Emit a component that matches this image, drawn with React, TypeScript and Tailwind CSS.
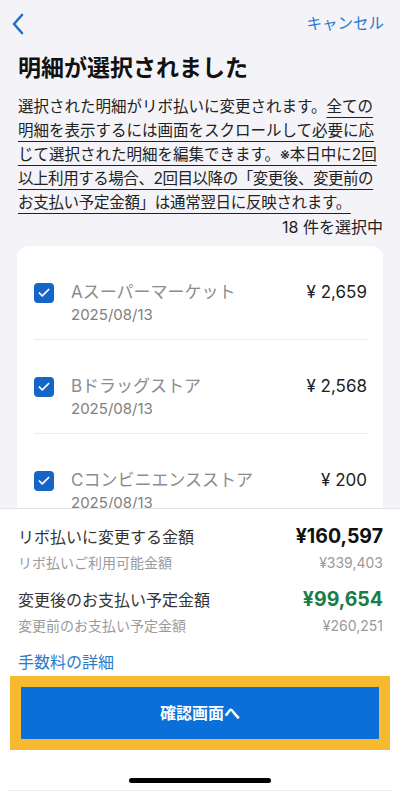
import { Check } from 'lucide-react';

const FONT = { fontFamily: '"Inter", "Noto Sans CJK JP", sans-serif' };

const ITEMS = [
  { name: 'Aスーパーマーケット', date: '2025/08/13', amount: '¥ 2,659' },
  { name: 'Bドラッグストア', date: '2025/08/13', amount: '¥ 2,568' },
  { name: 'Cコンビニエンスストア', date: '2025/08/13', amount: '¥ 200' },
];

function Row({ name, date, amount, last }: { name: string; date: string; amount: string; last?: boolean }) {
  return (
    <div className={`flex items-start pt-[34px] pb-[13px] ${last ? '' : 'border-b border-[#ececec]'}`}>
      <div className="mt-[3px] w-5 h-5 rounded-[4px] bg-[#1565c8] flex items-center justify-center shrink-0">
        <Check className="w-[14px] h-[14px] text-white" strokeWidth={3} />
      </div>
      <div className="ml-[17px] flex-1">
        <div className="text-[17px] leading-6 text-[#8c8c8c]">{name}</div>
        <div className="text-[15px] leading-[22px] text-[#7f7f7f]">{date}</div>
      </div>
      <div className="text-[17px] leading-6 text-[#222]">{amount}</div>
    </div>
  );
}

export default function App() {
  return (
    <div style={FONT} className="w-[400px] h-[792px] overflow-hidden flex flex-col bg-[#f4f3f7]">
      <div className="flex-1 overflow-hidden">
        <div className="h-[48px] px-3 flex items-center justify-between">
          <svg width="12" height="22" viewBox="0 0 12 22">
            <path d="M10 2 L2 11 L10 20" fill="none" stroke="#1e73c8" strokeWidth="2.6" strokeLinecap="round" strokeLinejoin="round" />
          </svg>
          <span className="text-[15.5px] text-[#2a7acb] mr-[4px]">キャンセル</span>
        </div>

        <h1 className="mt-[4px] px-[18px] text-[23px] leading-8 font-bold text-[#111]">明細が選択されました</h1>

        <p className="mt-[11px] px-[18px] text-[15.5px] leading-6 text-[#222] whitespace-nowrap">
          選択された明細がリボ払いに変更されます。
          <span className="underline decoration-1 underline-offset-[5px]">
            全ての
            <br />
            明細を表示するには画面をスクロールして必要に応
            <br />
            じて選択された明細を編集できます。※本日中に2回
            <br />
            <span className="tracking-[-0.45px]">以上利用する場合、2回目以降の「変更後、変更前の</span>
            <br />
            <span className="tracking-[-0.3px]">お支払い予定金額」は通常翌日に反映されます。</span>
          </span>
        </p>

        <div className="px-[17px] text-right text-[16px] leading-6 text-[#222]">18 件を選択中</div>

        <div className="mt-[7px] mx-[17px] bg-white rounded-xl px-[17px] pr-[16px]">
          {ITEMS.map((it, i) => (
            <Row key={it.name} {...it} last={i === ITEMS.length - 1} />
          ))}
        </div>
      </div>

      <div className="h-[284px] shrink-0 bg-white border-t border-[#e4e4e4] flex flex-col">
        <div className="pl-[18px] pr-[17px] pt-[16px]">
          <div className="flex items-center justify-between h-6">
            <span className="text-[16px] text-[#333]">リボ払いに変更する金額</span>
            <span className="text-[19.5px] font-bold text-[#111]">¥160,597</span>
          </div>
          <div className="mt-[3px] flex items-center justify-between h-5 text-[14px] text-[#9a9a9a]">
            <span>リボ払いご利用可能金額</span>
            <span>¥339,403</span>
          </div>
          <div className="mt-[16px] flex items-center justify-between h-6">
            <span className="text-[16px] text-[#333]">変更後のお支払い予定金額</span>
            <span className="text-[19.5px] font-bold text-[#1a7d48]">¥99,654</span>
          </div>
          <div className="mt-[3px] flex items-center justify-between h-5 text-[14px] text-[#9a9a9a]">
            <span>変更前のお支払い予定金額</span>
            <span>¥260,251</span>
          </div>
          <div className="mt-[15px] text-[16px] leading-6 text-[#2a7acb]">手数料の詳細</div>
        </div>

        <div className="mt-[2px] mx-[10px] bg-[#f6b92f] p-[11px]">
          <button className="w-full h-[52px] bg-[#0a6fd8] text-white text-[16px] font-bold">確認画面へ</button>
        </div>

        <div className="mt-[28px] flex justify-center">
          <div className="w-[142px] h-[5px] rounded-full bg-black" />
        </div>
        <div className="mt-[7px] mx-[8px] border-t border-[#ececec]" />
      </div>
    </div>
  );
}
